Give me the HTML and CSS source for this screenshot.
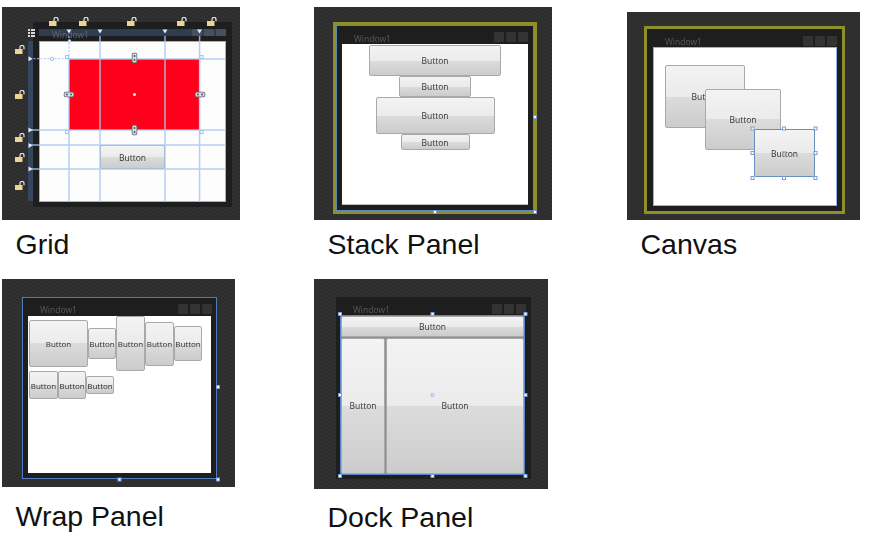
FILE: index.html
```html
<!DOCTYPE html>
<html lang="en">
<head>
    <meta charset="UTF-8">
    <title>WPF Layout Panels</title>
    <link rel="stylesheet" href="styles.css">
</head>
<body>
    <svg class="defs" width="0" height="0">
        <symbol id="lock" viewBox="0 0 11 9">
            <path d="M5 4.5V2.4a2 2 0 0 1 4 0v1.8" fill="none" stroke="#e6e6e6" stroke-width="1.2"/>
            <rect x="0" y="4" width="7.5" height="5" fill="#ead690"/>
        </symbol>
        <symbol id="pin" viewBox="0 0 6 11">
            <rect x="0.5" y="0.5" width="5" height="10" rx="2" fill="#d5deee" stroke="#666666"/>
            <circle cx="3" cy="3.4" r="1" fill="#555"/>
            <circle cx="3" cy="7.6" r="1" fill="#555"/>
        </symbol>
    </svg>

    <div class="gallery">
        <!-- Grid -->
        <figure class="panel">
            <div class="tile tile-grid">
                <div class="window window-grid">
                    <div class="title-bar title-grid">
                        <span class="title-text">Window1</span>
                        <div class="controls"><i></i><i></i><i></i></div>
                    </div>
                    <div class="client client-grid">
                        <div class="red-box"></div>
                        <div class="btn btn-grid">Button</div>
                    </div>
                </div>
                <svg class="overlay" viewBox="2 7 238 213">
                    <rect x="28" y="41" width="5" height="160" fill="#36465f"/>
                    <g stroke="#a9c9f3" stroke-width="1.5" opacity="0.85">
                        <path d="M69 59V202M100 36V202M165 36V202M199.6 36V202"/>
                        <path d="M69 59H226M30 130H226M30 145H226M30 169H226"/>
                    </g>
                    <path d="M69 36V59M30 58.7H69" stroke="#a9c9f3" stroke-dasharray="2 1.5" fill="none"/>
                    <g fill="#dcebff">
                        <path d="M66.5 29.5h5l-2.5 4zM97.5 29.5h5l-2.5 4zM162.5 29.5h5l-2.5 4zM197 29.5h5l-2.5 4z"/>
                        <path d="M28.5 56.2v5l4-2.5zM28.5 127.5v5l4-2.5zM28.5 143v5l4-2.5zM28.5 166.5v5l4-2.5z"/>
                    </g>
                    <g fill="#fff" stroke="#9fc1ee">
                        <circle cx="52" cy="59" r="1.6"/>
                        <circle cx="69.5" cy="41" r="1.3"/>
                        <rect x="65.5" y="55.5" width="3" height="3"/>
                        <rect x="200" y="55.5" width="3" height="3"/>
                        <rect x="65.5" y="130.5" width="3" height="3"/>
                        <rect x="200" y="130.5" width="3" height="3"/>
                    </g>
                    <circle cx="134.5" cy="94.5" r="1.5" fill="#fff"/>
                    <use href="#pin" x="131.5" y="52.5" width="6" height="11"/>
                    <use href="#pin" x="131.5" y="124.5" width="6" height="11"/>
                    <use href="#pin" transform="translate(74.5 91.5) rotate(90)" width="6" height="11"/>
                    <use href="#pin" transform="translate(205.5 91.5) rotate(90)" width="6" height="11"/>
                    <g fill="#d8d8d8">
                        <rect x="28" y="29" width="2" height="2"/><rect x="31" y="29" width="4" height="2"/>
                        <rect x="28" y="32" width="2" height="2"/><rect x="31" y="32" width="4" height="2"/>
                        <rect x="28" y="35" width="2" height="2"/><rect x="31" y="35" width="4" height="2"/>
                    </g>
                    <use href="#lock" x="49" y="17" width="11" height="9"/>
                    <use href="#lock" x="79" y="17" width="11" height="9"/>
                    <use href="#lock" x="127" y="17" width="11" height="9"/>
                    <use href="#lock" x="177" y="17" width="11" height="9"/>
                    <use href="#lock" x="207" y="17" width="11" height="9"/>
                    <use href="#lock" x="15" y="45" width="11" height="9"/>
                    <use href="#lock" x="15" y="90" width="11" height="9"/>
                    <use href="#lock" x="15" y="133" width="11" height="9"/>
                    <use href="#lock" x="15" y="153" width="11" height="9"/>
                    <use href="#lock" x="15" y="181" width="11" height="9"/>
                </svg>
            </div>
            <figcaption>Grid</figcaption>
        </figure>

        <!-- Stack Panel -->
        <figure class="panel">
            <div class="tile tile-stack">
                <div class="window window-stack">
                    <div class="title-bar">
                        <span class="title-text">Window1</span>
                        <div class="controls"><i></i><i></i><i></i></div>
                    </div>
                    <div class="client client-stack">
                        <div class="btn sb-1">Button</div>
                        <div class="btn sb-2">Button</div>
                        <div class="btn sb-3">Button</div>
                        <div class="btn sb-4">Button</div>
                    </div>
                </div>
                <svg class="overlay handles" viewBox="314 7 238 213">
                    <rect x="533.5" y="115.5" width="3" height="3"/>
                    <rect x="433.5" y="210.5" width="3" height="3"/>
                    <rect x="533.5" y="210.5" width="3" height="3"/>
                </svg>
            </div>
            <figcaption>Stack Panel</figcaption>
        </figure>

        <!-- Canvas -->
        <figure class="panel panel-canvas">
            <div class="tile tile-canvas">
                <div class="window window-canvas">
                    <div class="title-bar">
                        <span class="title-text">Window1</span>
                        <div class="controls"><i></i><i></i><i></i></div>
                    </div>
                    <div class="client client-canvas">
                        <div class="btn cb-1">Button</div>
                        <div class="btn cb-2">Button</div>
                        <div class="btn cb-3">Button</div>
                    </div>
                </div>
                <svg class="overlay handles" viewBox="627 12 233 208">
                    <rect x="751" y="127" width="3" height="3"/>
                    <rect x="782.5" y="127" width="3" height="3"/>
                    <rect x="814" y="127" width="3" height="3"/>
                    <rect x="751" y="151.5" width="3" height="3"/>
                    <rect x="814" y="151.5" width="3" height="3"/>
                    <rect x="751" y="176.5" width="3" height="3"/>
                    <rect x="782.5" y="176.5" width="3" height="3"/>
                    <rect x="814" y="176.5" width="3" height="3"/>
                    <circle cx="784" cy="153" r="1.4" fill="none" stroke="#9fc1ee"/>
                </svg>
            </div>
            <figcaption>Canvas</figcaption>
        </figure>

        <!-- Wrap Panel -->
        <figure class="panel panel-low">
            <div class="tile tile-wrap">
                <div class="window window-wrap">
                    <div class="title-bar">
                        <span class="title-text">Window1</span>
                        <div class="controls"><i></i><i></i><i></i></div>
                    </div>
                    <div class="client client-wrap">
                        <div class="btn wb-1">Button</div>
                        <div class="btn wb-2">Button</div>
                        <div class="btn wb-3">Button</div>
                        <div class="btn wb-4">Button</div>
                        <div class="btn wb-5">Button</div>
                        <div class="btn wb-6">Button</div>
                        <div class="btn wb-7">Button</div>
                        <div class="btn wb-8">Button</div>
                    </div>
                </div>
                <svg class="overlay handles" viewBox="2 279 233 208">
                    <rect x="216.5" y="385.5" width="3" height="3"/>
                    <rect x="118" y="478" width="3" height="3"/>
                    <rect x="216.5" y="478" width="3" height="3"/>
                </svg>
            </div>
            <figcaption>Wrap Panel</figcaption>
        </figure>

        <!-- Dock Panel -->
        <figure class="panel panel-low">
            <div class="tile tile-dock">
                <div class="window window-dock">
                    <div class="title-bar">
                        <span class="title-text">Window1</span>
                        <div class="controls"><i></i><i></i><i></i></div>
                    </div>
                    <div class="client client-dock">
                        <div class="btn db-top">Button</div>
                        <div class="btn">Button</div>
                        <div class="btn">Button</div>
                    </div>
                </div>
                <svg class="overlay handles" viewBox="314 279 234 210">
                    <rect x="338.5" y="312.5" width="3" height="3"/>
                    <rect x="431" y="312.5" width="3" height="3"/>
                    <rect x="524" y="312.5" width="3" height="3"/>
                    <rect x="338.5" y="393.5" width="3" height="3"/>
                    <rect x="524" y="393.5" width="3" height="3"/>
                    <rect x="338.5" y="474.5" width="3" height="3"/>
                    <rect x="431" y="474.5" width="3" height="3"/>
                    <rect x="524" y="474.5" width="3" height="3"/>
                    <circle cx="432.5" cy="395" r="1.6" fill="#cfe0f8" stroke="#9fc1ee"/>
                </svg>
            </div>
            <figcaption>Dock Panel</figcaption>
        </figure>
    </div>
</body>
</html>
```

FILE: styles.css
```css
body {
    margin: 0;
    background-color: #ffffff;
    font-family: "Liberation Sans", Arial, sans-serif;
}
.defs {
    position: absolute;
}
.gallery {
    display: grid;
    grid-template-columns: 312px 313px 233px;
    grid-template-rows: 272px auto;
    padding: 7px 0 0 2px;
}
.panel {
    margin: 0;
}
.panel-canvas {
    margin-top: 5px;
}
figcaption {
    margin: 8px 0 0 13.5px;
    font-size: 28.5px;
    line-height: 32px;
    color: #111111;
}
.panel-low figcaption {
    margin-top: 13px;
}
.panel-low .tile-dock + figcaption {
    margin-top: 12px;
}
.tile {
    position: relative;
    overflow: hidden;
    background: repeating-conic-gradient(#2c2c2c 0 25%, #323232 0 50%) 0 0 / 4px 4px;
    filter: blur(0.35px);
}
.tile-grid, .tile-stack {
    width: 238px;
    height: 213px;
}
.tile-canvas, .tile-wrap {
    width: 233px;
    height: 208px;
}
.tile-dock {
    width: 234px;
    height: 210px;
}
.overlay {
    position: absolute;
    top: 0;
    left: 0;
    width: 100%;
    height: 100%;
}
.handles rect {
    fill: #ffffff;
    stroke: #6f9fe0;
}

/* the designer's window */
.window {
    box-sizing: border-box;
    display: flex;
    flex-direction: column;
    background-color: #1e1e1e;
}
.window-grid {
    width: 199px;
    height: 185px;
    margin: 15px 0 0 31px;
    padding: 0 6px 5px;
}
.window-stack {
    width: 204px;
    height: 192px;
    margin: 15px 0 0 19px;
    padding: 0 6px 6px;
    border: 3px solid #8e8e2c;
    box-shadow: inset 0 0 0 1px #5a86b8;
}
.window-canvas {
    width: 201px;
    height: 188px;
    margin: 14px 0 0 17px;
    padding: 0 5px 5px 6px;
    border: 3px solid #8e8e2c;
}
.window-wrap {
    width: 195px;
    height: 182px;
    margin: 18px 0 0 20px;
    padding: 0 5px 5px;
    border: 1px solid #4f7cc0;
}
.window-dock {
    width: 195px;
    height: 182px;
    margin: 18px 0 0 22px;
    padding: 0 7px 5px 5px;
}
.title-bar {
    display: flex;
    flex: 0 0 19px;
    box-sizing: border-box;
    align-items: flex-end;
    justify-content: space-between;
    padding: 0 0 2px 12px;
}
.window-canvas .title-bar, .window-wrap .title-bar {
    flex-basis: 18px;
}
.window-canvas .title-bar {
    padding-bottom: 1px;
}
.window-wrap .controls {
    margin-right: -1px;
}
.window-dock .controls {
    margin-right: -2px;
}
.title-grid {
    padding: 0 0 5px 13px;
    background: linear-gradient(#1e1e1e 0 7px, #2f3c52 7px 14px, #1e1e1e 14px);
}
.title-grid .controls i {
    width: 10px;
    height: 7px;
    background-color: #46505f;
}
.title-text {
    margin-bottom: -1px;
    font-family: "Open Sans", sans-serif;
    font-size: 8.5px;
    line-height: 10px;
    color: #5a5a5a;
}
.window-stack .title-text {
    margin-bottom: -2px;
}
.title-grid .title-text {
    margin-bottom: -3px;
    line-height: 8px;
    color: #5f6672;
}
.controls {
    display: flex;
    gap: 2px;
}
.controls i {
    display: block;
    width: 10px;
    height: 10px;
    border-radius: 1px;
    background-color: #333333;
}

/* client areas, one per panel type */
.client {
    flex: 1;
    min-height: 0;
    background-color: #ffffff;
}
.client-grid {
    display: grid;
    box-sizing: border-box;
    grid-template-columns: 29px 31px 65px 34px 1fr;
    grid-template-rows: 17px 71px 15px 24px 1fr;
    border: 1px solid #8db4ea;
    background-color: #fdfdfd;
}
.red-box {
    grid-column: 2 / 5;
    grid-row: 2;
    background-color: #fe0019;
}
.btn-grid {
    grid-column: 3;
    grid-row: 4;
}
.client-stack {
    display: flex;
    flex-direction: column;
    align-items: center;
    padding-top: 1px;
    border-bottom: 1px solid #bbbbbb;
}
.sb-1 { width: 132px; height: 31px; flex: none; }
.sb-2 { width: 72px; height: 21px; flex: none; }
.sb-3 { width: 119px; height: 37px; flex: none; }
.sb-4 { width: 69px; height: 16px; flex: none; }
.client-canvas {
    position: relative;
    box-sizing: border-box;
    border: 1px solid #8db4ea;
}
.client-canvas .btn {
    position: absolute;
}
.cb-1 { left: 11px; top: 17px; width: 80px; height: 63px; }
.cb-2 { left: 51px; top: 41px; width: 76px; height: 61px; }
.client-canvas .cb-3 { left: 100px; top: 81px; width: 61px; height: 48px; border-color: #6c8ebf; }
.client-wrap {
    display: flex;
    flex-wrap: wrap;
    align-items: center;
    align-content: flex-start;
    padding-left: 1px;
}
.wb-1 { width: 59px; height: 47px; }
.wb-2 { width: 28px; height: 31px; }
.wb-3 { width: 29px; height: 55px; }
.wb-4 { width: 29px; height: 44px; }
.wb-5 { width: 28px; height: 35px; }
.wb-6 { width: 29px; height: 28px; }
.wb-7 { width: 28px; height: 28px; }
.wb-8 { width: 28px; height: 18px; }
.client-dock {
    display: grid;
    grid-template-columns: 44px 1fr;
    grid-template-rows: 21px 1fr;
    gap: 1px;
    background-color: #8f8f8f;
    outline: 1px solid #5a86c8;
}
.client-dock .btn {
    padding-bottom: 2px;
}
.client-dock .db-top {
    grid-column: 1 / 3;
    padding-bottom: 0;
}

.btn {
    box-sizing: border-box;
    display: flex;
    align-items: center;
    justify-content: center;
    border: 1px solid #a9a9a9;
    border-radius: 2px;
    background: linear-gradient(#f3f3f3, #ebebeb 50%, #dcdcdc 50%, #cccccc);
    font-family: "Open Sans", sans-serif;
    font-size: 8.5px;
    color: #333333;
}
.client-wrap .btn {
    font-size: 8px;
}
```
